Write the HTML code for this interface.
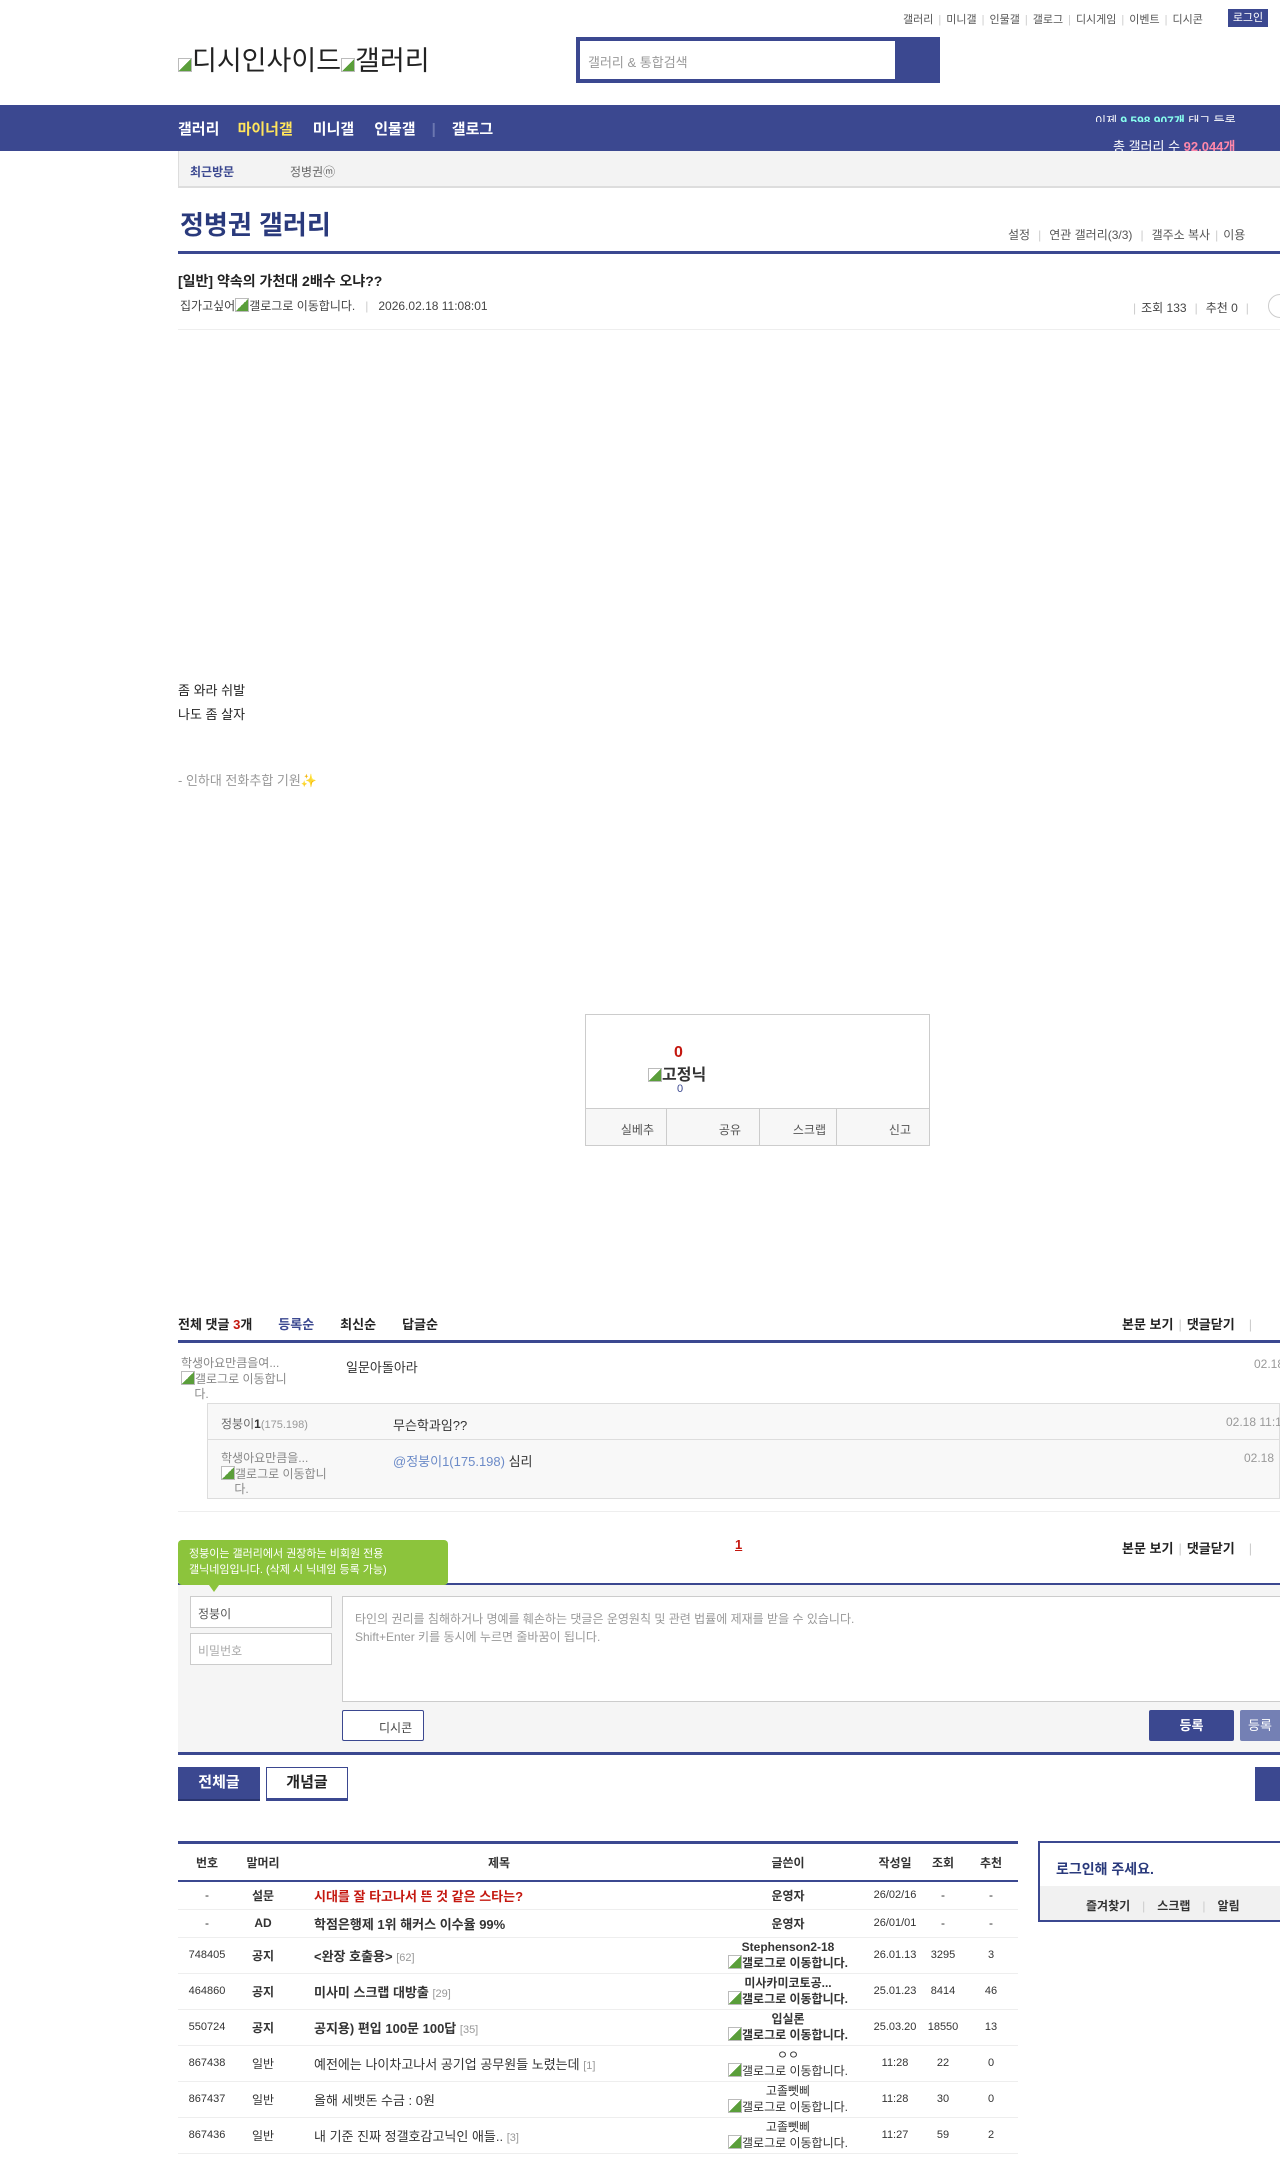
<!DOCTYPE html>
<html><head><meta charset="utf-8"><style>
*{margin:0;padding:0;box-sizing:border-box}
body{width:1280px;height:2157px;overflow:hidden;position:relative;background:#fff;font-family:"Liberation Sans","Noto Sans CJK KR",sans-serif;color:#333;font-size:13px}
.a{position:absolute;white-space:nowrap}
.navy{background:#3b4890}
.sep{color:#ccc;margin:0 5px}
table{border-collapse:collapse}
.lt td{height:36px;text-align:center;font-size:12px;border-bottom:1px solid #eee;color:#333;padding:0}
.lt td.t{text-align:left;padding-left:24px;font-size:13px}
.lt tr.s td{height:28px}
.img{display:inline-block;width:14px;height:14px;border:1px solid #bbb;background:linear-gradient(135deg,#fff 50%,#5a9e3a 50%);vertical-align:-2px}
</style></head><body>
<div class="a" style="top:11px;left:903px;font-size:11px;color:#555">갤러리<span class="sep">|</span>미니갤<span class="sep">|</span>인물갤<span class="sep">|</span>갤로그<span class="sep">|</span>디시게임<span class="sep">|</span>이벤트<span class="sep">|</span>디시콘</div>
<div class="a navy" style="top:9px;left:1228px;width:40px;height:18px;color:#fff;font-size:11px;text-align:center;line-height:18px">로그인</div>
<div class="a" style="top:39px;left:178px;font-size:27px;color:#222"><span class="img"></span>디시인사이드<span class="img"></span>갤러리</div>
<div class="a navy" style="top:37px;left:576px;width:364px;height:46px"></div>
<div class="a" style="top:41px;left:580px;width:315px;height:38px;background:#fff;color:#999;font-size:13px;padding:11px 8px">갤러리 &amp; 통합검색</div>
<div class="a navy" style="top:105px;left:0;width:1280px;height:46px"></div>
<div class="a" style="top:118px;left:178px;color:#fff;font-size:15px;font-weight:bold">갤러리 <span style="color:#ffe45c;margin-left:14px">마이너갤</span><span style="margin-left:20px">미니갤</span><span style="margin-left:20px">인물갤</span><span style="color:#6c77b0;margin:0 16px">|</span>갤로그</div>
<div class="a" style="top:112px;left:1095px;color:#fff;font-size:12px;height:10px;overflow:hidden">이제 <b style="color:#8fe">9,598,907개</b> 태그 등록</div>
<div class="a" style="top:136px;left:1113px;color:#fff;font-size:13px;height:15px;overflow:hidden">총 갤러리 수 <b style="color:#f8a">92,044개</b></div>
<div class="a" style="top:151px;left:178px;width:1102px;height:37px;background:#f3f3f3;border-bottom:2px solid #ddd;border-left:1px solid #ddd"></div>
<div class="a" style="top:163px;left:190px;font-size:12px;color:#3b4890;font-weight:bold">최근방문</div>
<div class="a" style="top:163px;left:290px;font-size:12px;color:#666">정병권ⓜ</div>
<div class="a" style="top:205px;left:180px;font-size:26px;color:#2a3a7c;font-weight:bold">정병권 갤러리</div>
<div class="a" style="top:226px;left:1008px;font-size:12px;color:#555">설정<span class="sep" style="margin:0 8px">|</span>연관 갤러리(3/3)<span class="sep" style="margin:0 8px">|</span>갤주소 복사<span class="sep">|</span>이용</div>
<div class="a navy" style="top:251px;left:178px;width:1102px;height:3px"></div>
<div class="a" style="top:271px;left:178px;font-size:14px;font-weight:bold;color:#222">[일반] 약속의 가천대 2배수 오냐??</div>
<div class="a" style="top:297px;left:180px;font-size:12px;color:#444">집가고싶어<span class="img"></span>갤로그로 이동합니다.<span class="sep" style="margin:0 10px">|</span>2026.02.18 11:08:01</div>
<div class="a" style="top:299px;left:1128px;font-size:12px;color:#444"><span class="sep">|</span>조회 133<span class="sep" style="margin:0 8px">|</span>추천 0<span class="sep" style="margin:0 8px">|</span></div>
<div class="a" style="top:294px;left:1268px;width:24px;height:24px;border:1px solid #ccc;border-radius:50%"></div>
<div class="a" style="top:329px;left:178px;width:1102px;height:1px;background:#eee"></div>
<div class="a" style="top:679px;left:178px;font-size:13px;color:#222;line-height:24px">좀 와라 쉬발<br>나도 좀 살자</div>
<div class="a" style="top:770px;left:178px;font-size:13px;color:#999">- 인하대 전화추합 기원✨</div>
<div class="a" style="top:1014px;left:585px;width:345px;height:132px;border:1px solid #ccc"></div>
<div class="a" style="top:1044px;left:674px;font-size:16px;font-weight:bold;color:#c4170f">0</div>
<div class="a" style="top:1061px;left:648px;font-size:16px;font-weight:bold;color:#333"><span class="img"></span>고정닉</div>
<div class="a" style="top:1083px;left:677px;font-size:11px;color:#3b4890">0</div>
<div class="a" style="top:1108px;left:586px;width:343px;height:37px;background:#f7f7f7;border-top:1px solid #ccc;display:flex;font-size:12px;color:#555">
<div style="flex:1;border-right:1px solid #ccc;text-align:right;padding:12px 12px">실베추</div><div style="flex:1;border-right:1px solid #ccc;text-align:right;padding:12px 18px">공유</div><div style="flex:1;border-right:1px solid #ccc;text-align:right;padding:12px 10px">스크랩</div><div style="flex:1;text-align:right;padding:12px 18px">신고</div></div>
<div class="a" style="top:1314px;left:178px;font-size:13px;font-weight:bold;color:#222">전체 댓글 <span style="color:#c4170f">3</span>개<span style="color:#3b4890;margin-left:26px">등록순</span><span style="margin-left:26px">최신순</span><span style="margin-left:26px">답글순</span></div>
<div class="a" style="top:1314px;left:1122px;font-size:13px;font-weight:bold;color:#222">본문 보기<span class="sep" style="font-weight:normal">|</span>댓글닫기<span class="sep" style="font-weight:normal;margin-left:14px">|</span></div>
<div class="a navy" style="top:1340px;left:178px;width:1102px;height:3px"></div>
<div class="a" style="top:1356px;left:181px;font-size:12px;color:#888;line-height:15px">학생아요만큼을여...<br><span class="img"></span>갤로그로 이동합니<br>&nbsp;&nbsp;&nbsp;&nbsp;다.</div>
<div class="a" style="top:1357px;left:346px;font-size:13px">일문아돌아라</div>
<div class="a" style="top:1357px;left:1254px;font-size:12px;color:#999">02.18</div>
<div class="a" style="top:1403px;left:207px;width:1073px;height:96px;background:#f8f8f8;border:1px solid #ddd"></div>
<div class="a" style="top:1439px;left:208px;width:1072px;height:1px;background:#ddd"></div>
<div class="a" style="top:1415px;left:221px;font-size:12px;color:#666">정붕이<b style="color:#333">1</b><span style="font-size:11px;color:#999">(175.198)</span></div>
<div class="a" style="top:1415px;left:393px;font-size:13px">무슨학과임??</div>
<div class="a" style="top:1415px;left:1226px;font-size:12px;color:#999">02.18 11:1</div>
<div class="a" style="top:1451px;left:221px;font-size:12px;color:#888;line-height:15px">학생아요만큼을...<br><span class="img"></span>갤로그로 이동합니<br>&nbsp;&nbsp;&nbsp;&nbsp;다.</div>
<div class="a" style="top:1451px;left:393px;font-size:13px"><span style="color:#6c8bc8">@정붕이1(175.198)</span> 심리</div>
<div class="a" style="top:1451px;left:1244px;font-size:12px;color:#999">02.18</div>
<div class="a" style="top:1511px;left:178px;width:1102px;height:1px;background:#eee"></div>
<div class="a" style="top:1537px;left:735px;font-size:13px;font-weight:bold;color:#c4170f;text-decoration:underline">1</div>
<div class="a" style="top:1538px;left:1122px;font-size:13px;font-weight:bold;color:#222">본문 보기<span class="sep" style="font-weight:normal">|</span>댓글닫기<span class="sep" style="font-weight:normal;margin-left:14px">|</span></div>
<div class="a navy" style="top:1583px;left:178px;width:1102px;height:2px"></div>
<div class="a" style="top:1585px;left:178px;width:1102px;height:168px;background:#f5f5f5"></div>
<div class="a" style="top:1540px;left:178px;width:270px;height:45px;background:#8cc43c;border-radius:4px;color:#fff;font-size:11px;line-height:16px;padding:6px 11px">정붕이는 갤러리에서 권장하는 비회원 전용<br>갤닉네임입니다. (삭제 시 닉네임 등록 가능)</div>
<div class="a" style="top:1585px;left:209px;width:0;height:0;border-left:5px solid transparent;border-right:5px solid transparent;border-top:7px solid #8cc43c"></div>
<div class="a" style="top:1596px;left:190px;width:142px;height:32px;background:#fff;border:1px solid #ccc;font-size:12px;color:#555;padding:8px 7px">정붕이</div>
<div class="a" style="top:1633px;left:190px;width:142px;height:32px;background:#fff;border:1px solid #ccc;font-size:12px;color:#aaa;padding:8px 7px">비밀번호</div>
<div class="a" style="top:1596px;left:342px;width:940px;height:106px;background:#fff;border:1px solid #ccc;font-size:12px;color:#999;padding:13px 12px;line-height:18px">타인의 권리를 침해하거나 명예를 훼손하는 댓글은 운영원칙 및 관련 법률에 제재를 받을 수 있습니다.<br>Shift+Enter 키를 동시에 누르면 줄바꿈이 됩니다.</div>
<div class="a" style="top:1710px;left:342px;width:82px;height:31px;background:#fff;border:1px solid #3b4890;border-radius:2px;font-size:12px;color:#444;padding:8px 0 0 36px">디시콘</div>
<div class="a navy" style="top:1710px;left:1149px;width:85px;height:31px;color:#fff;font-size:13px;font-weight:bold;text-align:center;line-height:31px;border-radius:2px">등록</div>
<div class="a" style="top:1710px;left:1240px;width:85px;height:31px;background:#7480b4;color:#fff;font-size:13px;text-align:center;line-height:31px;padding-right:45px;border-radius:2px">등록</div>
<div class="a navy" style="top:1752px;left:178px;width:1102px;height:3px"></div>
<div class="a navy" style="top:1767px;left:178px;width:82px;height:34px;color:#fff;font-size:15px;font-weight:bold;text-align:center;line-height:32px;border-bottom:2px solid #2a3570">전체글</div>
<div class="a" style="top:1767px;left:266px;width:82px;height:34px;border:1px solid #3b4890;border-bottom:3px solid #3b4890;color:#222;font-size:15px;font-weight:bold;text-align:center;line-height:30px">개념글</div>
<div class="a navy" style="top:1767px;left:1255px;width:40px;height:34px"></div>
<div class="a navy" style="top:1841px;left:178px;width:840px;height:3px"></div>
<table class="a lt" style="top:1844px;left:178px;width:840px">
<tr style="font-weight:bold"><td style="width:58px;height:37px;border-bottom:2px solid #3b4890">번호</td><td style="width:54px;border-bottom:2px solid #3b4890">말머리</td><td style="border-bottom:2px solid #3b4890">제목</td><td style="width:160px;border-bottom:2px solid #3b4890">글쓴이</td><td style="width:54px;border-bottom:2px solid #3b4890">작성일</td><td style="width:42px;border-bottom:2px solid #3b4890">조회</td><td style="width:54px;border-bottom:2px solid #3b4890">추천</td></tr>
<tr class="s"><td>-</td><td><b>설문</b></td><td class="t"><b style="color:#c4170f">시대를 잘 타고나서 뜬 것 같은 스타는?</b></td><td><b>운영자</b></td><td style="font-size:11px">26/02/16</td><td>-</td><td>-</td></tr>
<tr class="s"><td>-</td><td><b>AD</b></td><td class="t"><b>학점은행제 1위 해커스 이수율 99%</b></td><td><b>운영자</b></td><td style="font-size:11px">26/01/01</td><td>-</td><td>-</td></tr>
<tr><td style="font-size:11px">748405</td><td><b>공지</b></td><td class="t"><b>&lt;완장 호출용&gt;</b> <span style="color:#999;font-size:11px">[62]</span></td><td style="line-height:15px"><b>Stephenson2-18</b><br><span class="img"></span><b>갤로그로 이동합니다.</b></td><td style="font-size:11px">26.01.13</td><td style="font-size:11px">3295</td><td style="font-size:11px">3</td></tr>
<tr><td style="font-size:11px">464860</td><td><b>공지</b></td><td class="t"><b>미사미 스크랩 대방출</b> <span style="color:#999;font-size:11px">[29]</span></td><td style="line-height:15px"><b>미사카미코토공...</b><br><span class="img"></span><b>갤로그로 이동합니다.</b></td><td style="font-size:11px">25.01.23</td><td style="font-size:11px">8414</td><td style="font-size:11px">46</td></tr>
<tr><td style="font-size:11px">550724</td><td><b>공지</b></td><td class="t"><b>공지용) 편입 100문 100답</b> <span style="color:#999;font-size:11px">[35]</span></td><td style="line-height:15px"><b>입실론</b><br><span class="img"></span><b>갤로그로 이동합니다.</b></td><td style="font-size:11px">25.03.20</td><td style="font-size:11px">18550</td><td style="font-size:11px">13</td></tr>
<tr><td style="font-size:11px">867438</td><td>일반</td><td class="t">예전에는 나이차고나서 공기업 공무원들 노렸는데 <span style="color:#999;font-size:11px">[1]</span></td><td style="line-height:15px">ㅇㅇ<br><span class="img"></span>갤로그로 이동합니다.</td><td style="font-size:11px">11:28</td><td style="font-size:11px">22</td><td style="font-size:11px">0</td></tr>
<tr><td style="font-size:11px">867437</td><td>일반</td><td class="t">올해 세뱃돈 수금 : 0원</td><td style="line-height:15px">고졸뻿삐<br><span class="img"></span>갤로그로 이동합니다.</td><td style="font-size:11px">11:28</td><td style="font-size:11px">30</td><td style="font-size:11px">0</td></tr>
<tr><td style="font-size:11px">867436</td><td>일반</td><td class="t">내 기준 진짜 정갤호감고닉인 애들.. <span style="color:#999;font-size:11px">[3]</span></td><td style="line-height:15px">고졸뻿삐<br><span class="img"></span>갤로그로 이동합니다.</td><td style="font-size:11px">11:27</td><td style="font-size:11px">59</td><td style="font-size:11px">2</td></tr>
</table>
<div class="a" style="top:1841px;left:1038px;width:260px;height:81px;border:2px solid #3b4890;border-right:none"></div>
<div class="a" style="top:1859px;left:1056px;font-size:14px;font-weight:bold;color:#2a3a7c">로그인해 주세요.</div>
<div class="a" style="top:1886px;left:1040px;width:240px;height:34px;background:#f1f1f1"></div>
<div class="a" style="top:1897px;left:1086px;font-size:12px;font-weight:bold;color:#333">즐겨찾기<span class="sep" style="font-weight:normal;margin:0 12px">|</span>스크랩<span class="sep" style="font-weight:normal;margin:0 12px">|</span>알림</div>
</body></html>
